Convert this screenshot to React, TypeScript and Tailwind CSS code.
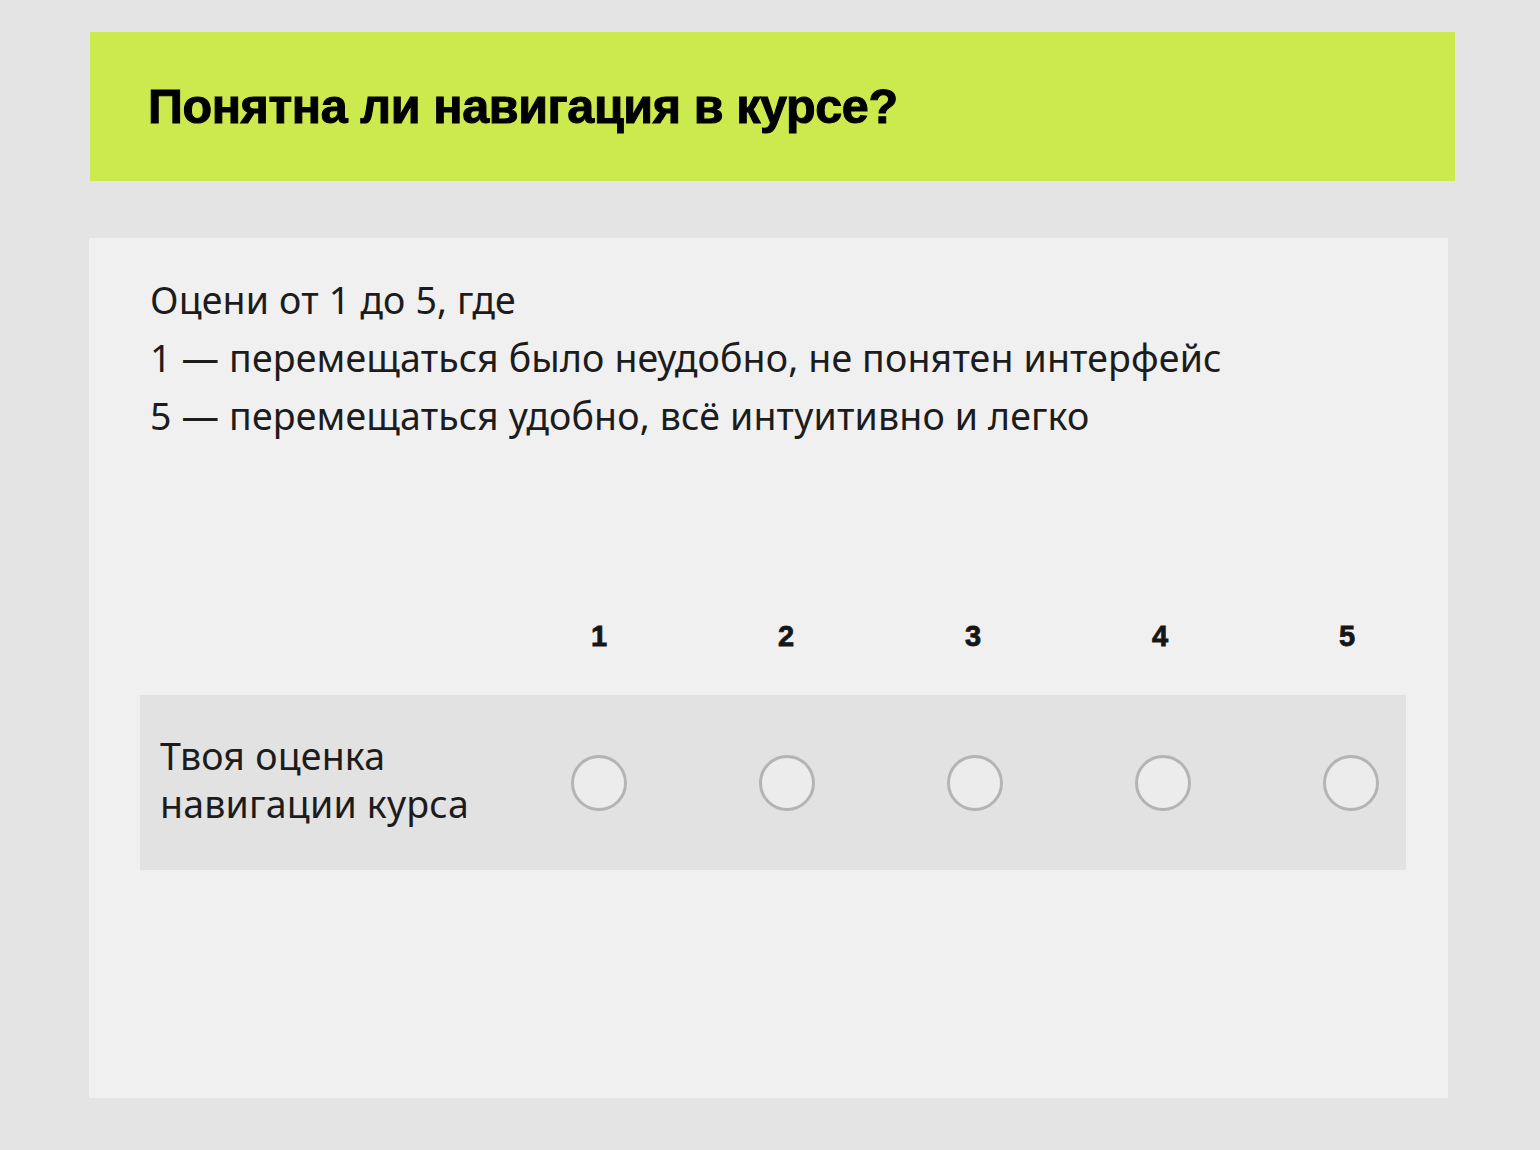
const scores = [1, 2, 3, 4, 5];

export default function App() {
  return (
    <div className="min-h-[1150px] bg-[#e4e4e4] pt-[32px] pl-[90px] pr-[85px] pb-[52px] font-['Liberation_Sans',sans-serif]">
      <div className="bg-[#cce94e] h-[149px] flex items-center pl-[58px]">
        <h1 className="text-[48.5px] font-bold text-black tracking-[-0.4px] [-webkit-text-stroke:1px_#000]">
          Понятна ли навигация в курсе?
        </h1>
      </div>

      <div className="mt-[57px] mr-[7px] -ml-[1px] bg-[#f0f0f0] h-[860px] pl-[51px] pr-[42px]">
        <div className="pt-[33px] pl-[10px] text-[#1c1c1c] font-['Noto_Sans',sans-serif] text-[37.5px] tracking-[0.15px] leading-[58px]">
          <p>Оцени от 1 до 5, где</p>
          <p>1 — перемещаться было неудобно, не понятен интерфейс</p>
          <p>5 — перемещаться удобно, всё интуитивно и легко</p>
        </div>

        <div className="mt-[175px] flex pl-[431px] gap-[131px] h-[32px] items-center">
          {scores.map((n) => (
            <div
              key={n}
              className="w-[56px] text-center text-[29px] font-bold text-[#161616] leading-[32px] [-webkit-text-stroke:0.8px_#161616]"
            >
              {n}
            </div>
          ))}
        </div>

        <div className="mt-[43px] bg-[#e2e2e2] h-[175px] flex items-center pl-[20px]">
          <div className="w-[411px] pb-[6px] text-[37.5px] tracking-[0.2px] leading-[48px] text-[#1c1c1c] font-['Noto_Sans',sans-serif]">
            Твоя оценка
            <br />
            навигации курса
          </div>
          <div className="flex gap-[132px]">
            {scores.map((n) => (
              <span
                key={n}
                className="block w-[56px] h-[56px] rounded-full border-[3px] border-[#b4b4b4] bg-[#ececec]"
              />
            ))}
          </div>
        </div>
      </div>
    </div>
  );
}
